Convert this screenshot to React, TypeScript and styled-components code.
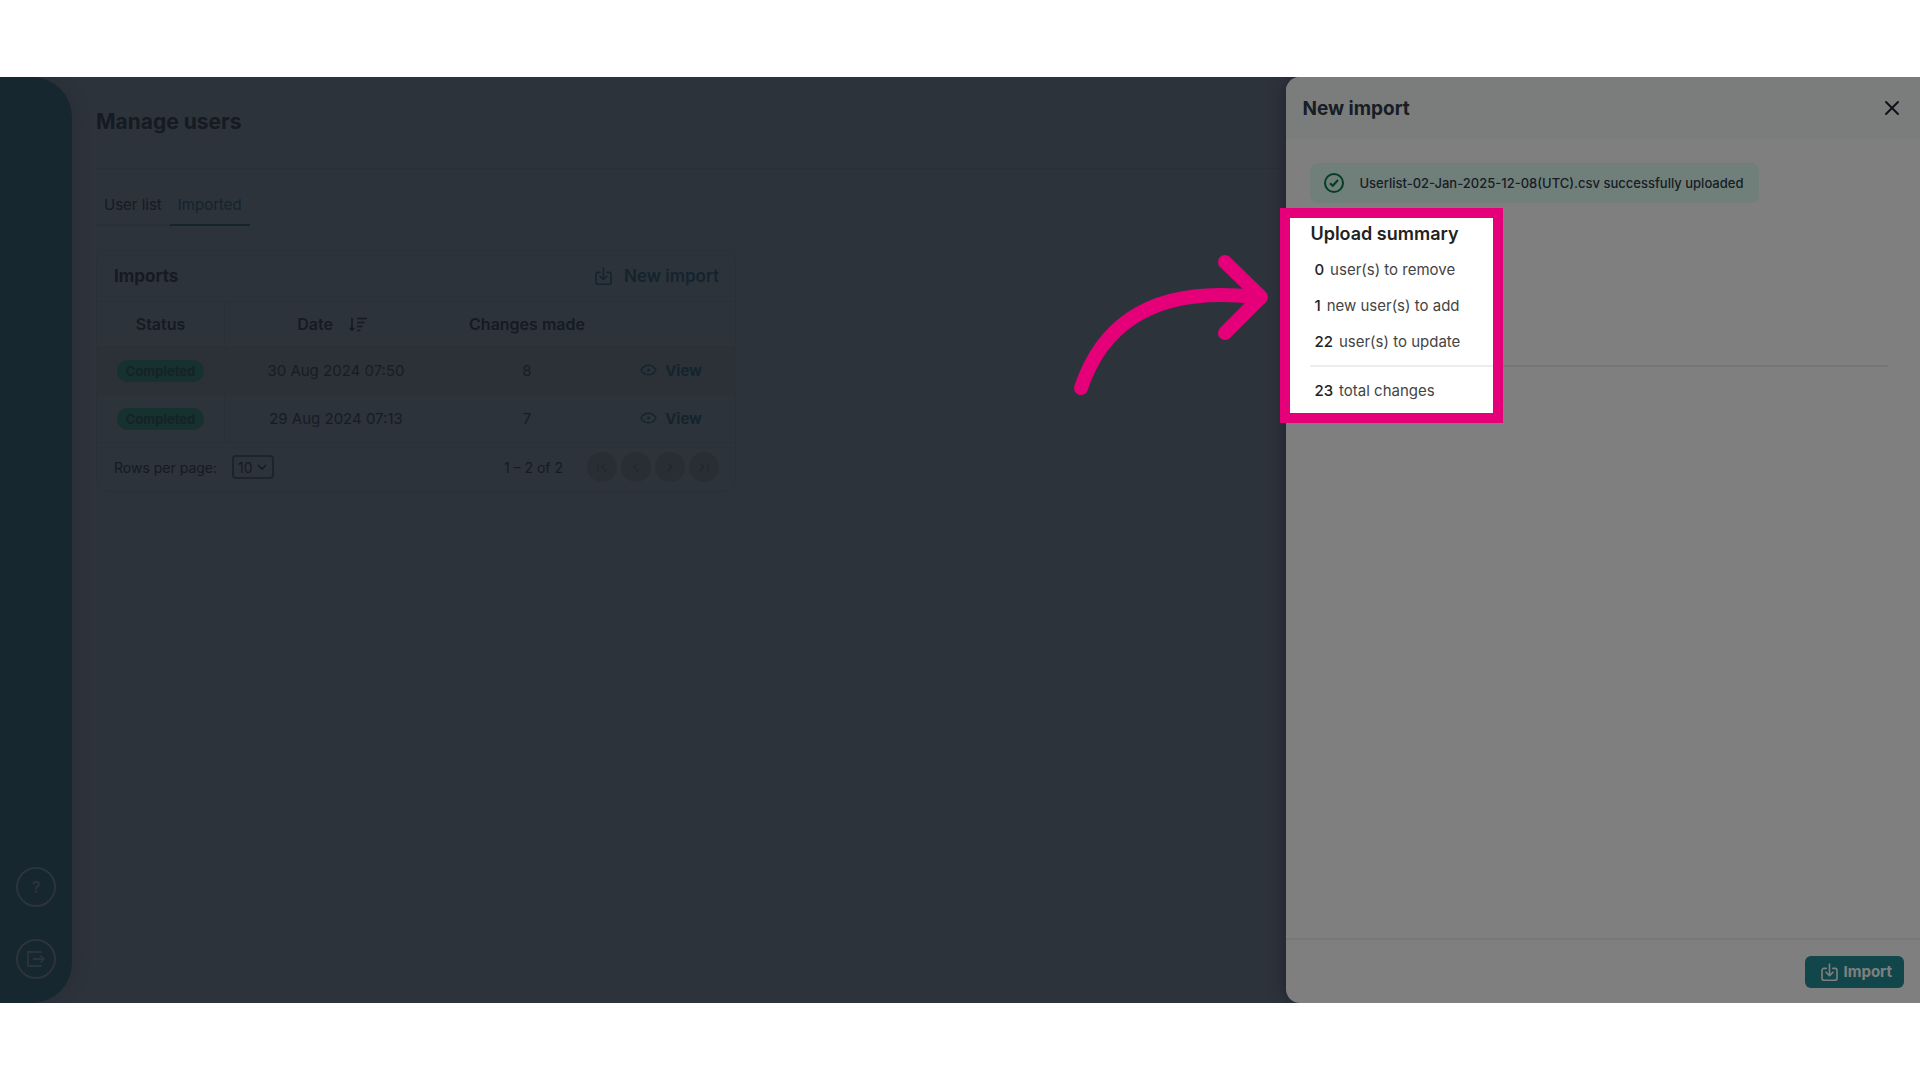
import React from "react";
import styled, { createGlobalStyle, css } from "styled-components";

const color = {
  canvas: "#5a6676",
  line: "#556170",
  stripe: "#586371",
  ink: "#2a3546",
  inkSoft: "#2e3949",
  teal: "#26485a",
  rail: "#2e4e5e",
  pill: "#2c625e",
  pink: "#e5007a",
};

const GlobalStyle = createGlobalStyle`
  *, *::before, *::after { box-sizing: border-box; }
  body {
    margin: 0;
    background: #fff;
    font-family: Inter, "Liberation Sans", sans-serif;
    font-size: 16px;
  }
  button, select { font: inherit; color: inherit; }
  h1, h2, h3, p, ul { margin: 0; padding: 0; }
`;

const Page = styled.div`
  display: flex;
  min-height: 100vh;
  padding: 77px 0;
`;

const Stage = styled.div`
  position: relative;
  display: flex;
  flex: 1;
  overflow: hidden;
  background: ${color.canvas};
`;

const Rail = styled.nav`
  display: flex;
  flex-direction: column;
  justify-content: flex-end;
  align-items: center;
  gap: 32px;
  width: 72px;
  padding-bottom: 24px;
  border-radius: 0 40px 40px 0;
  background: ${color.rail};
  box-shadow: 4px 0 16px rgba(40, 45, 60, 0.12);
`;

const RailButton = styled.button`
  display: grid;
  place-items: center;
  width: 40px;
  height: 40px;
  padding: 0;
  border: 2px solid ${color.canvas};
  border-radius: 50%;
  background: none;
  color: ${color.canvas};
  font-weight: 600;
`;

const Main = styled.main`
  flex: 1;
  min-width: 0;
  padding: 24px;
  color: ${color.ink};
`;

const PageHead = styled.header`
  height: 68px;
  margin-right: -24px;
  border-bottom: 1px solid ${color.line};
`;

const PageTitle = styled.h1`
  font-size: 21px;
  font-weight: 700;
  line-height: 42px;
`;

const Tabs = styled.div`
  display: flex;
  margin: 16px 0 24px;
`;

const Tab = styled.button<{ $active?: boolean }>`
  height: 41px;
  padding: 0 8px;
  border: 0;
  border-bottom: 2px solid ${(p) => (p.$active ? color.teal : color.line)};
  background: none;
  color: ${(p) => (p.$active ? color.teal : color.ink)};
  font-size: 15px;
`;

const Card = styled.section`
  width: 640px;
  border: 1px solid ${color.line};
  border-radius: 12px;
`;

const CardHead = styled.header`
  display: flex;
  align-items: center;
  justify-content: space-between;
  height: 50px;
  padding: 0 16px 0 17px;
`;

const CardTitle = styled.h2`
  font-size: 17px;
  font-weight: 700;
`;

const LinkButton = styled.button<{ $large?: boolean }>`
  display: inline-flex;
  align-items: center;
  gap: ${(p) => (p.$large ? 12 : 8)}px;
  padding: 0;
  border: 0;
  background: none;
  color: ${color.teal};
  font-size: ${(p) => (p.$large ? 17 : 15)}px;
  font-weight: ${(p) => (p.$large ? 600 : 700)};
`;

const Table = styled.table`
  width: 100%;
  table-layout: fixed;
  border-spacing: 0;
  text-align: center;
`;

const cell = css`
  padding: 0;
  border-bottom: 1px solid ${color.line};
  &:first-child { border-right: 1px solid ${color.line}; }
`;

const Th = styled.th<{ $width?: number }>`
  ${cell}
  width: ${(p) => (p.$width ? `${p.$width}px` : "auto")};
  height: 46px;
  border-top: 1px solid ${color.line};
  font-weight: 600;
`;

const Td = styled.td`
  ${cell}
  height: 48px;
  color: ${color.inkSoft};
  font-size: 15px;
`;

const Row = styled.tr`
  &:nth-child(odd) { background: ${color.stripe}; }
`;

const SortLabel = styled.span`
  display: inline-flex;
  align-items: center;
  gap: 16px;
  padding-right: 8px;
`;

const Pill = styled.span`
  display: inline-block;
  padding: 0 9px;
  border-radius: 11px;
  background: ${color.pill};
  color: #2a4450;
  font-size: 13px;
  font-weight: 700;
  line-height: 22px;
`;

const CardFoot = styled.footer`
  display: flex;
  align-items: center;
  height: 48px;
  padding: 0 16px 0 17px;
  font-size: 14px;
`;

const SelectWrap = styled.span`
  display: inline-grid;
  align-items: center;
  margin-left: 15px;
  > * { grid-area: 1 / 1; }
  > svg { justify-self: end; margin-right: 7px; pointer-events: none; }
`;

const PageSize = styled.select`
  appearance: none;
  width: 42px;
  height: 24px;
  padding: 0 0 0 4px;
  border: 2px solid #3c4858;
  border-radius: 4px;
  background: none;
  font-size: 14px;
`;

const Range = styled.span`
  margin-left: auto;
`;

const Pager = styled.div`
  display: flex;
  gap: 4px;
  margin-left: 24px;
`;

const PagerButton = styled.button`
  display: grid;
  place-items: center;
  width: 30px;
  height: 30px;
  padding: 0;
  border: 0;
  border-radius: 50%;
  background: #535d6a;
  color: #465160;
`;

const Drawer = styled.aside`
  position: relative;
  display: flex;
  flex-direction: column;
  width: 33%;
  border-radius: 14px 0 0 14px;
  background: #fff;
  box-shadow: -2px 0 16px rgba(30, 30, 60, 0.4);
  color: #303b4c;
`;

const DrawerHead = styled.header`
  display: flex;
  align-items: center;
  justify-content: space-between;
  height: 62px;
  padding: 0 20px 0 16px;
  border-radius: 14px 0 0 0;
  background: #f6faf8;
`;

const DrawerTitle = styled.h2`
  font-size: 19px;
  font-weight: 700;
`;

const CloseButton = styled.button`
  display: grid;
  padding: 0;
  border: 0;
  background: none;
  color: #1c2430;
`;

const DrawerBody = styled.div`
  display: flex;
  flex: 1;
  flex-direction: column;
  align-items: flex-start;
  gap: 16px;
  padding: 24px 32px 24px 24px;
`;

const Notice = styled.p`
  display: flex;
  align-items: center;
  gap: 15px;
  height: 40px;
  padding: 0 16px 0 14px;
  border-radius: 8px;
  background: #e1fff3;
  font-size: 13px;
  font-weight: 500;
  white-space: nowrap;
`;

const Summary = styled.section`
  position: relative;
  align-self: stretch;
  color: #444;
`;

const SummaryTitle = styled.h3`
  margin-bottom: 2px;
  color: #222;
  font-size: 18px;
  font-weight: 600;
  line-height: 30px;
`;

const Changes = styled.ul`
  list-style: none;
`;

const Change = styled.li<{ $total?: boolean }>`
  display: flex;
  align-items: center;
  gap: 6px;
  height: ${(p) => (p.$total ? 48 : 36)}px;
  margin-top: ${(p) => (p.$total ? 6 : 0)}px;
  padding-left: 4px;
  border-top: ${(p) => (p.$total ? "2px solid #ececee" : "0")};
  font-size: 15px;
`;

const Count = styled.span`
  color: #222;
  font-weight: 500;
`;

/* The frame's spread shadow dims everything outside the highlighted area. */
const Spotlight = styled.div`
  position: absolute;
  top: -11px;
  left: -30px;
  width: 223px;
  height: 215px;
  border: 10px solid ${color.pink};
  box-shadow: 0 0 0 4000px rgba(0, 0, 0, 0.5);
  pointer-events: none;
`;

const Arrow = styled.svg`
  position: absolute;
  top: 36px;
  right: 225px;
  overflow: visible;
`;

const DrawerFoot = styled.footer`
  display: flex;
  align-items: center;
  justify-content: flex-end;
  height: 65px;
  padding: 0 16px;
  border-top: 2px solid #f1f1f3;
`;

const ImportButton = styled.button`
  display: flex;
  align-items: center;
  gap: 6px;
  height: 32px;
  padding: 0 12px 0 16px;
  border: 0;
  border-radius: 6px;
  background: #228e96;
  color: #fff;
  font-size: 15px;
  font-weight: 700;
`;

const ImportIcon = () => (
  <svg width="17" height="18" viewBox="0 0 17 18" fill="none" stroke="currentColor" strokeWidth="1.6" strokeLinecap="round" strokeLinejoin="round" aria-hidden="true">
    <path d="M5.2 5.4H3a2 2 0 0 0-2 2v7.8a2 2 0 0 0 2 2h11a2 2 0 0 0 2-2V7.4a2 2 0 0 0-2-2h-2.2" />
    <path d="M8.5 1v11.4M5 9.2l3.5 3.4L12 9.2" />
  </svg>
);

const EyeIcon = () => (
  <svg width="17" height="12" viewBox="0 0 17 12" fill="none" stroke="currentColor" strokeWidth="1.5" aria-hidden="true">
    <path d="M1 6c3.4-6.4 11.6-6.4 15 0-3.4 6.4-11.6 6.4-15 0Z" strokeLinejoin="round" />
    <circle cx="8.5" cy="6" r="1.5" fill="currentColor" stroke="none" />
  </svg>
);

const SortIcon = () => (
  <svg width="18" height="15" viewBox="0 0 18 15" fill="none" stroke="currentColor" strokeWidth="1.6" aria-hidden="true">
    <path d="M3 1v11.5M.6 10.8 3 13.4l2.4-2.6" />
    <path d="M8 1.5h10M8 5.5h7.5M8 9.5h5.5M8 13.5h3.5" />
  </svg>
);

const Chevron = () => (
  <svg width="10" height="6" viewBox="0 0 10 6" fill="none" stroke="currentColor" strokeWidth="1.6" aria-hidden="true">
    <path d="m1 1 4 4 4-4" />
  </svg>
);

const pagerPaths: Record<string, string> = {
  "First page": "M2 2v8M10 2 6 6l4 4",
  "Previous page": "M8 2 4 6l4 4",
  "Next page": "m4 2 4 4-4 4",
  "Last page": "m2 2 4 4-4 4M10 2v8",
};

const imports = [
  { status: "Completed", date: "30 Aug 2024 07:50", changes: 8 },
  { status: "Completed", date: "29 Aug 2024 07:13", changes: 7 },
];

const changes = [
  { count: 0, label: "user(s) to remove" },
  { count: 1, label: "new user(s) to add" },
  { count: 22, label: "user(s) to update" },
  { count: 23, label: "total changes", total: true },
];

export default function App() {
  return (
    <Page>
      <GlobalStyle />
      <Stage>
        <Rail aria-label="Main">
          <RailButton aria-label="Help">?</RailButton>
          <RailButton aria-label="Log out">
            <svg width="18" height="16" viewBox="0 0 18 16" fill="none" stroke="currentColor" strokeWidth="1.8" aria-hidden="true">
              <path d="M15 1H1v14h14M6 8h11M13.5 4.5 17 8l-3.5 3.5" />
            </svg>
          </RailButton>
        </Rail>
        <Main>
          <PageHead>
            <PageTitle>Manage users</PageTitle>
          </PageHead>
          <Tabs role="tablist">
            <Tab role="tab" aria-selected={false}>User list</Tab>
            <Tab role="tab" aria-selected $active>Imported</Tab>
          </Tabs>
          <Card>
            <CardHead>
              <CardTitle>Imports</CardTitle>
              <LinkButton $large><ImportIcon />New import</LinkButton>
            </CardHead>
            <Table>
              <thead>
                <tr>
                  <Th $width={128}>Status</Th>
                  <Th $width={222}><SortLabel>Date<SortIcon /></SortLabel></Th>
                  <Th $width={160}>Changes made</Th>
                  <Th aria-label="Actions" />
                </tr>
              </thead>
              <tbody>
                {imports.map((item) => (
                  <Row key={item.date}>
                    <Td><Pill>{item.status}</Pill></Td>
                    <Td>{item.date}</Td>
                    <Td>{item.changes}</Td>
                    <Td><LinkButton><EyeIcon />View</LinkButton></Td>
                  </Row>
                ))}
              </tbody>
            </Table>
            <CardFoot>
              <label htmlFor="page-size">Rows per page:</label>
              <SelectWrap>
                <PageSize id="page-size" defaultValue="10">
                  <option>10</option>
                </PageSize>
                <Chevron />
              </SelectWrap>
              <Range>1 – 2 of 2</Range>
              <Pager>
                {Object.entries(pagerPaths).map(([label, d]) => (
                  <PagerButton key={label} aria-label={label}>
                    <svg width="12" height="12" viewBox="0 0 12 12" fill="none" stroke="currentColor" strokeWidth="1.6" aria-hidden="true">
                      <path d={d} />
                    </svg>
                  </PagerButton>
                ))}
              </Pager>
            </CardFoot>
          </Card>
        </Main>
        <Drawer aria-label="New import">
          <DrawerHead>
            <DrawerTitle>New import</DrawerTitle>
            <CloseButton aria-label="Close">
              <svg width="16" height="16" viewBox="0 0 16 16" stroke="currentColor" strokeWidth="2" strokeLinecap="round" aria-hidden="true">
                <path d="m2 2 12 12M14 2 2 14" />
              </svg>
            </CloseButton>
          </DrawerHead>
          <DrawerBody>
            <Notice role="status">
              <svg width="20" height="20" viewBox="0 0 20 20" fill="none" stroke="#087a4c" strokeWidth="2" aria-hidden="true">
                <circle cx="10" cy="10" r="9" />
                <path d="m6 10.2 2.8 2.6L14 7" strokeWidth="2.2" />
              </svg>
              Userlist-02-Jan-2025-12-08(UTC).csv successfully uploaded
            </Notice>
            <Summary>
              <SummaryTitle>Upload summary</SummaryTitle>
              <Changes>
                {changes.map((item) => (
                  <Change key={item.label} $total={item.total}>
                    <Count>{item.count}</Count>
                    {item.label}
                  </Change>
                ))}
              </Changes>
              <Spotlight>
                <Arrow width="200" height="146" viewBox="0 0 200 146" fill="none" stroke={color.pink} strokeLinecap="round" strokeLinejoin="round" strokeWidth="14" aria-hidden="true">
                  <path d="M13 134C36 65 92 32 187 43" />
                  <path d="m157 8 36 35-36 36" />
                </Arrow>
              </Spotlight>
            </Summary>
          </DrawerBody>
          <DrawerFoot>
            <ImportButton><ImportIcon />Import</ImportButton>
          </DrawerFoot>
        </Drawer>
      </Stage>
    </Page>
  );
}
